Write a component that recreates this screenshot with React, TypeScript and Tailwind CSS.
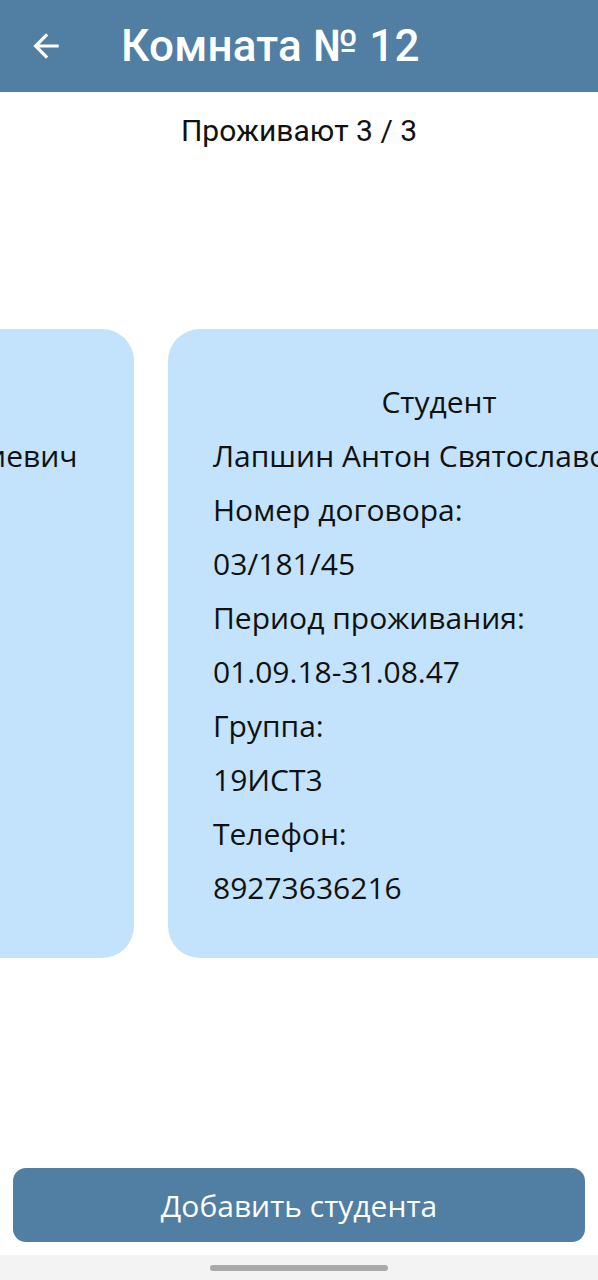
import React from 'react';

type Student = {
  name: string;
  contract: string;
  period: string;
  group: string;
  phone: string;
};

const students: Student[] = [
  {
    name: 'Соколовский Лев Валериевич',
    contract: '03/181/44',
    period: '01.09.18-31.08.47',
    group: '19ИСТ3',
    phone: '89271234567',
  },
  {
    name: 'Лапшин Антон Святославович',
    contract: '03/181/45',
    period: '01.09.18-31.08.47',
    group: '19ИСТ3',
    phone: '89273636216',
  },
];

function StudentCard({ s }: { s: Student }) {
  const rows = [
    s.name,
    'Номер договора:',
    s.contract,
    'Период проживания:',
    s.period,
    'Группа:',
    s.group,
    'Телефон:',
    s.phone,
  ];
  return (
    <div className="shrink-0 w-[542px] h-[629px] rounded-[32px] bg-[#c2e3fb] pt-[46px] px-[45px] text-[30px] leading-[54px] text-[#111] whitespace-nowrap overflow-hidden font-['Open_Sans',sans-serif]">
      <div className="text-center">Студент</div>
      {rows.map((r, i) => (
        <div key={i}>{r}</div>
      ))}
    </div>
  );
}

export default function App() {
  return (
    <div className="w-[598px] h-[1280px] bg-white flex flex-col overflow-hidden">
      {/* App bar */}
      <header className="h-[92px] shrink-0 bg-[#517ea3] flex items-center">
        <button className="w-[38px] h-[38px] ml-[27px] text-white">
          <svg viewBox="0 0 24 24" className="w-full h-full" fill="currentColor">
            <path d="M20 11H7.83l5.59-5.59L12 4l-8 8 8 8 1.41-1.41L7.83 13H20v-2z" />
          </svg>
        </button>
        <h1 className="ml-[56px] text-white text-[44px] font-medium tracking-[0.2px] font-['Roboto',sans-serif]">
          Комната № 12
        </h1>
      </header>

      <div className="pt-[20px] text-center text-[30px] leading-[38px] text-[#111] font-['Roboto',sans-serif]">
        Проживают 3 / 3
      </div>

      {/* Cards carousel */}
      <div className="mt-[179px] overflow-hidden">
        <div className="flex gap-[34px] ml-[-408px]">
          {students.map((s, i) => (
            <StudentCard key={i} s={s} />
          ))}
        </div>
      </div>

      <div className="flex-1" />

      <div className="px-[13px] pb-[13px]">
        <button className="w-full h-[74px] rounded-[13px] bg-[#517ea3] text-white text-[30px] font-['Open_Sans',sans-serif]">
          Добавить студента
        </button>
      </div>

      {/* System nav bar */}
      <div className="h-[25px] shrink-0 bg-[#f3f3f3] flex justify-center pt-[10px]">
        <div className="w-[178px] h-[6px] rounded-full bg-[#a9a9a9]" />
      </div>
    </div>
  );
}
